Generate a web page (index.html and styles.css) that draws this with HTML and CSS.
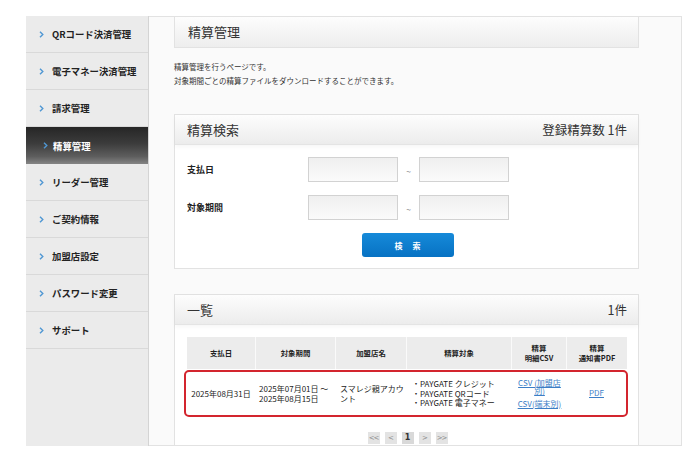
FILE: index.html
```html
<!DOCTYPE html>
<html lang="ja">
<head>
<meta charset="utf-8">
<title>精算管理</title>
<link rel="stylesheet" href="styles.css">
</head>
<body>
<div class="layout">
  <nav class="sidebar">
    <a class="nav-item"><svg class="chev" viewBox="0 0 5 7"><polyline points="1,0.8 3.8,3.5 1,6.2"/></svg><span>QRコード決済管理</span></a>
    <a class="nav-item"><svg class="chev" viewBox="0 0 5 7"><polyline points="1,0.8 3.8,3.5 1,6.2"/></svg><span>電子マネー決済管理</span></a>
    <a class="nav-item"><svg class="chev" viewBox="0 0 5 7"><polyline points="1,0.8 3.8,3.5 1,6.2"/></svg><span>請求管理</span></a>
    <a class="nav-item active"><svg class="chev" viewBox="0 0 5 7"><polyline points="1,0.8 3.8,3.5 1,6.2"/></svg><span>精算管理</span></a>
    <a class="nav-item"><svg class="chev" viewBox="0 0 5 7"><polyline points="1,0.8 3.8,3.5 1,6.2"/></svg><span>リーダー管理</span></a>
    <a class="nav-item"><svg class="chev" viewBox="0 0 5 7"><polyline points="1,0.8 3.8,3.5 1,6.2"/></svg><span>ご契約情報</span></a>
    <a class="nav-item"><svg class="chev" viewBox="0 0 5 7"><polyline points="1,0.8 3.8,3.5 1,6.2"/></svg><span>加盟店設定</span></a>
    <a class="nav-item"><svg class="chev" viewBox="0 0 5 7"><polyline points="1,0.8 3.8,3.5 1,6.2"/></svg><span>パスワード変更</span></a>
    <a class="nav-item"><svg class="chev" viewBox="0 0 5 7"><polyline points="1,0.8 3.8,3.5 1,6.2"/></svg><span>サポート</span></a>
  </nav>
  <main class="main">
    <div class="page-title">精算管理</div>
    <p class="desc">精算管理を行うページです。<br>対象期間ごとの精算ファイルをダウンロードすることができます。</p>

    <section class="panel search">
      <div class="panel-head"><h2>精算検索</h2><span class="count">登録精算数 1件</span></div>
      <div class="panel-body">
        <div class="form-row">
          <label class="form-label">支払日</label>
          <input class="field" type="text">
          <span class="tilde">~</span>
          <input class="field" type="text">
        </div>
        <div class="form-row">
          <label class="form-label">対象期間</label>
          <input class="field" type="text">
          <span class="tilde">~</span>
          <input class="field" type="text">
        </div>
        <div class="btn-row"><button class="btn" type="button">検 索</button></div>
      </div>
    </section>

    <section class="panel list">
      <div class="panel-head"><h2>一覧</h2><span class="count">1件</span></div>
      <div class="panel-body table-body">
        <div class="thead">
          <div class="th">支払日</div>
          <div class="th">対象期間</div>
          <div class="th">加盟店名</div>
          <div class="th">精算対象</div>
          <div class="th">精算<br>明細CSV</div>
          <div class="th">精算<br>通知書PDF</div>
        </div>
        <div class="trow">
          <div class="td center">2025年08月31日</div>
          <div class="td">2025年07月01日 ～<br>2025年08月15日</div>
          <div class="td">スマレジ親アカウント</div>
          <div class="td">・PAYGATE クレジット<br>・PAYGATE QRコード<br>・PAYGATE 電子マネー</div>
          <div class="td center links"><a class="lnk">CSV (加盟店別)</a><a class="lnk">CSV(端末別)</a></div>
          <div class="td center"><a class="lnk">PDF</a></div>
        </div>
        <div class="pager">
          <span class="pg">&lt;&lt;</span>
          <span class="pg">&lt;</span>
          <span class="pg current">1</span>
          <span class="pg">&gt;</span>
          <span class="pg">&gt;&gt;</span>
        </div>
      </div>
    </section>
  </main>
</div>
</body>
</html>
```

FILE: styles.css
```css
* { box-sizing: border-box; }
html, body { margin: 0; padding: 0; background: #fff; }
body {
  font-family: "Noto Sans CJK JP", "Noto Sans", "Liberation Sans", sans-serif;
  color: #222;
}
.layout {
  display: flex;
  padding: 16px 0 0 26px;
}
.sidebar {
  width: 123px;
  height: 430px;
  background: #ebebeb;
  border-right: 1px solid #d4d4d4;
  display: flex;
  flex-direction: column;
}
.nav-item {
  display: flex;
  align-items: center;
  height: 37px;
  padding-left: 13px;
  border-bottom: 1px solid #d9d9d9;
  font-size: 9.4px;
  font-weight: bold;
  color: #222;
  text-decoration: none;
  flex-shrink: 0;
}
.chev {
  width: 5px;
  height: 7px;
  margin-right: 8px;
  fill: none;
  stroke: #4f97d3;
  stroke-width: 1.4;
}
.nav-item.active {
  background: linear-gradient(#262626, #3c3c3c 45%, #5e5e5e 80%, #858585);
  color: #fff;
  border-bottom: none;
  padding-left: 17px;
  height: 37px;
}
.nav-item.active .chev { margin-right: 5px; }

.main {
  width: 533px;
  height: 430px;
  overflow: hidden;
  background: #fafafa;
  border: 1px solid #e2e2e2;
  border-left: none;
  padding: 0 42px 0 25px;
}
.page-title {
  height: 31px;
  border: 1px solid #e2e2e2;
  border-top: none;
  background: linear-gradient(#fdfdfd, #ededed);
  padding-left: 13px;
  font-size: 13px;
  line-height: 29px;
  color: #333;
}
.desc {
  margin: 12px 0 0;
  font-size: 7.5px;
  line-height: 14px;
  color: #333;
}
.panel {
  border: 1px solid #e2e2e2;
  background: #fff;
}
.search { margin-top: 26px; }
.list { margin-top: 25px; }
.panel-head {
  height: 30px;
  display: flex;
  align-items: center;
  justify-content: space-between;
  padding: 0 11px 0 12px;
  background: linear-gradient(#fdfdfd, #ececec);
  border-bottom: 1px solid #e4e4e4;
  box-shadow: 0 2px 4px rgba(0,0,0,0.04);
}
.panel-head h2 {
  margin: 0;
  font-size: 13px;
  font-weight: normal;
  color: #333;
}
.count {
  font-size: 12.5px;
  color: #333;
}
.panel-body {
  padding: 12px 11px 11px 12px;
}
.form-row {
  display: flex;
  align-items: center;
  margin-bottom: 13px;
}
.form-label {
  width: 121px;
  font-size: 9px;
  font-weight: bold;
  color: #222;
}
.field {
  width: 90px;
  height: 25px;
  margin: 0;
  border: 1px solid #d2d2d2;
  background: linear-gradient(#efefef, #fbfbfb);
  border-radius: 0;
}
.tilde {
  width: 21px;
  text-align: center;
  font-size: 8.5px;
  color: #777;
  padding-top: 3px;
}
.btn-row {
  display: flex;
  justify-content: center;
  padding-left: 1px;
}
.btn {
  width: 92px;
  height: 24px;
  border: none;
  border-radius: 3px;
  background: linear-gradient(#168ad9, #0772c3);
  color: #fff;
  font-family: inherit;
  font-size: 8px;
  font-weight: bold;
  letter-spacing: 4px;
  padding: 0 0 0 4px;
}
.table-body { padding-top: 12px; }
.thead {
  display: grid;
  grid-template-columns: 69px 80px 71px 105px 55px 60px;
  height: 32px;
}
.th {
  background: #ececec;
  border-right: 1px solid #fafafa;
  display: flex;
  align-items: center;
  justify-content: center;
  text-align: center;
  font-size: 7.4px;
  font-weight: bold;
  line-height: 10px;
  color: #222;
}
.th:last-child { border-right: none; }
.trow {
  display: grid;
  grid-template-columns: 70px 80px 71px 105px 55px 59px;
  height: 47px;
  margin: 1px -1px 0 -3px;
  border: 2px solid #d3252e;
  border-radius: 5px;
}
.td {
  display: flex;
  flex-direction: column;
  justify-content: center;
  font-size: 8px;
  line-height: 9.5px;
  color: #222;
  padding-left: 3px;
}
.td.center {
  align-items: center;
  text-align: center;
  padding: 0 2px;
}
.td:nth-child(3) { padding-left: 4px; padding-right: 2px; }
.td:nth-child(4) { padding-left: 5px; }
.lnk {
  color: #3c7ec6;
  text-decoration: underline;
  font-size: 8px;
  line-height: 8.5px;
}
.links .lnk + .lnk { margin-top: 4px; }
.pager {
  display: flex;
  justify-content: center;
  gap: 5px;
  margin-top: 15px;
  padding-left: 1px;
}
.pg {
  width: 12px;
  height: 12px;
  background: #e3e3e3;
  color: #8c8c8c;
  font-family: "DejaVu Sans", sans-serif;
  font-size: 7px;
  line-height: 12px;
  text-align: center;
  letter-spacing: -1px;
}
.pg.current {
  background: #d9d9d9;
  color: #333;
  font-weight: bold;
  font-size: 8px;
  letter-spacing: 0;
}
```
